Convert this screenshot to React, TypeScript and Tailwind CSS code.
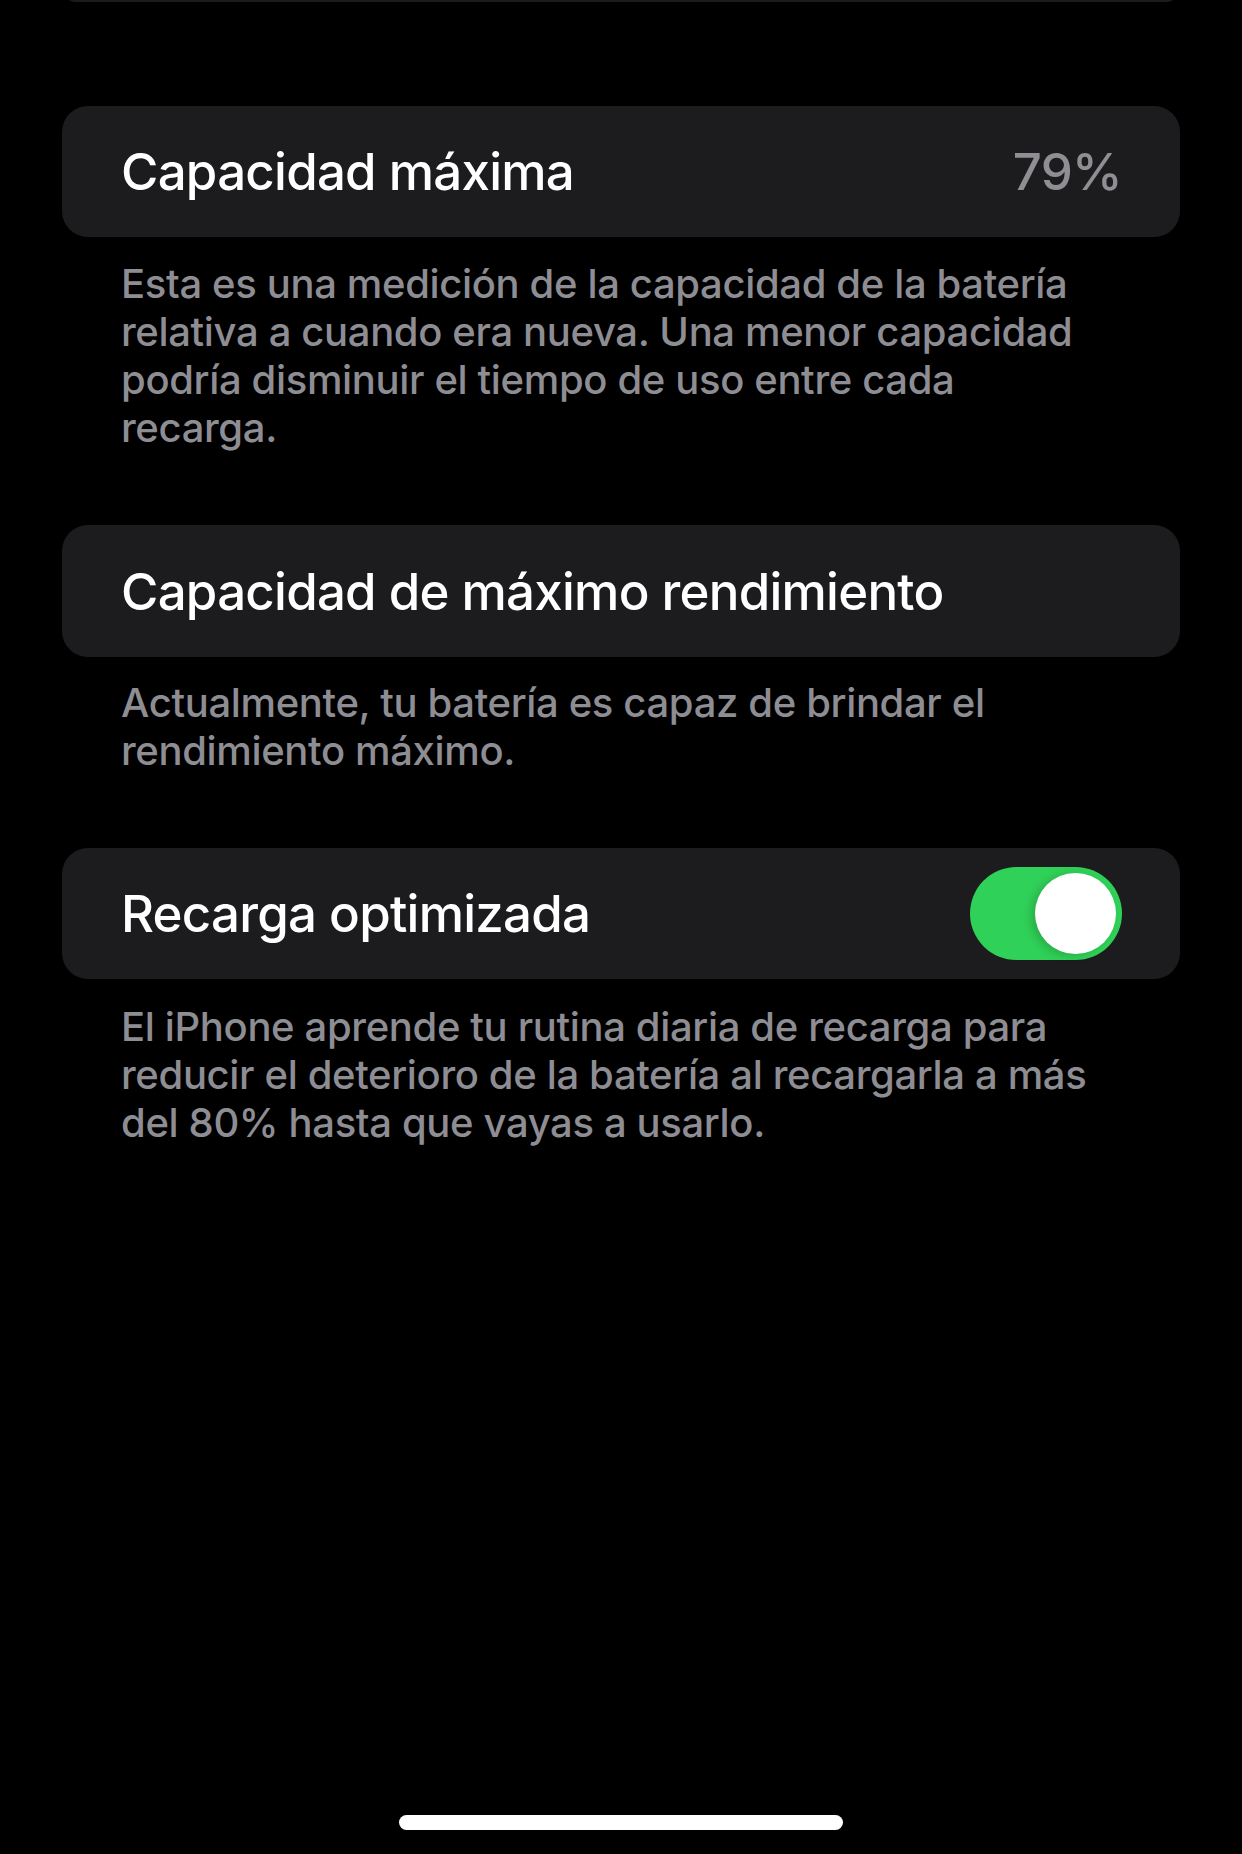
const cardClass = "mx-[62px] h-[131px] rounded-[26px] bg-[#1c1c1e] flex items-center justify-between pl-[59px] pr-[58px]";
const titleClass = "text-[51px] font-medium tracking-[-0.75px] leading-none";
const footerClass = "pl-[121px] pr-[135px] text-[40px] font-medium tracking-[-0.35px] leading-[48px] text-[#8d8d93]";

function Toggle() {
  return (
    <div className="w-[152px] h-[93px] rounded-full bg-[#30d158] flex items-center justify-end pr-[6px]">
      <div className="w-[81px] h-[81px] rounded-full bg-white shadow-[-4px_2px_10px_rgba(0,0,0,0.18)]" />
    </div>
  );
}

export default function App() {
  return (
    <div
      className="relative w-[1242px] h-[1854px] bg-black overflow-hidden"
      style={{ fontFamily: "Inter, 'Noto Sans', sans-serif" }}
    >
      {/* tail of the card above, scrolled out of view */}
      <div className="mx-[62px] -mt-[26px] h-[28px] rounded-[26px] bg-[#1c1c1e]" />

      <div className={`${cardClass} mt-[104px]`}>
        <span className={`${titleClass} text-white`}>Capacidad máxima</span>
        <span className={`${titleClass} text-[#8e8e93]`}>79%</span>
      </div>
      <p className={`${footerClass} pt-[23px]`}>
        Esta es una medición de la capacidad de la batería relativa a cuando era nueva. Una menor capacidad
        podría disminuir el tiempo de uso entre cada recarga.
      </p>

      <div className={`${cardClass} mt-[73px] h-[132px]`}>
        <span className={`${titleClass} text-white`}>Capacidad de máximo rendimiento</span>
      </div>
      <p className={`${footerClass} pt-[22px]`}>
        Actualmente, tu batería es capaz de brindar el rendimiento máximo.
      </p>

      <div className={`${cardClass} mt-[73px]`}>
        <span className={`${titleClass} text-white`}>Recarga optimizada</span>
        <Toggle />
      </div>
      <p className={`${footerClass} pt-[24px]`}>
        El iPhone aprende tu rutina diaria de recarga para reducir el deterioro de la batería al recargarla a más
        del 80% hasta que vayas a usarlo.
      </p>

      <div className="absolute bottom-[24px] left-1/2 -translate-x-1/2 w-[444px] h-[15px] rounded-full bg-white" />
    </div>
  );
}
